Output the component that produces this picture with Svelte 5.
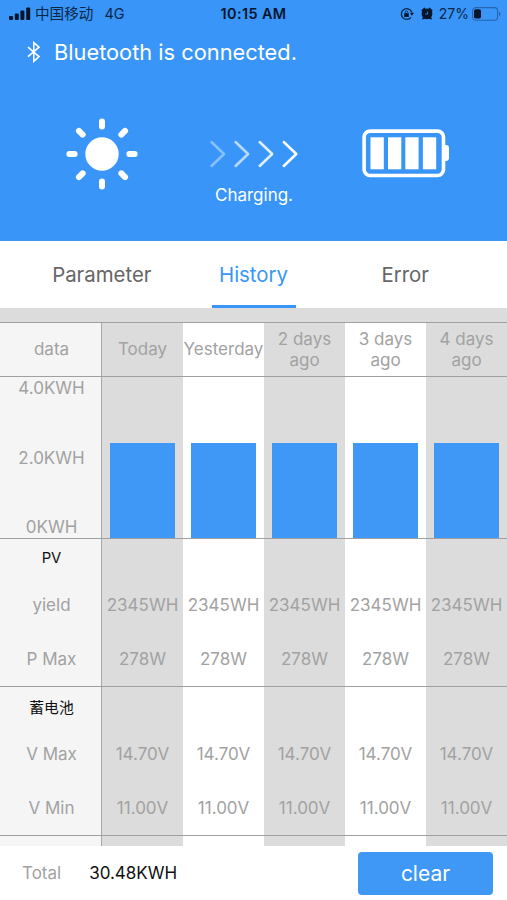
<script>
	let tabs = ["Parameter", "History", "Error"];
	let active = "History";

	// yield per day, in KWH
	const maxYield = 4;
	let days = [
		{ name: "Today", kwh: 2.36 },
		{ name: "Yesterday", kwh: 2.36 },
		{ name: "2 days ago", kwh: 2.36 },
		{ name: "3 days ago", kwh: 2.36 },
		{ name: "4 days ago", kwh: 2.36 }
	];

	let sections = [
		{ title: "PV", rows: [["yield", "2345WH"], ["P Max", "278W"]] },
		{ title: "蓄电池", rows: [["V Max", "14.70V"], ["V Min", "11.00V"]] }
	];

	const rays = [0, 45, 90, 135, 180, 225, 270, 315];
	const arrows = [0.4, 0.65, 0.85, 1];
	const cells = [9.5, 27, 44.3, 61.9];
</script>

<div class="app">
	<header>
		<div class="status">
			<div class="carrier">
				<svg width="22" height="14" viewBox="0 0 22 14">
					<rect x="0" y="9" width="4" height="4" rx="1" />
					<rect x="5.8" y="6.6" width="4" height="6.4" rx="1" />
					<rect x="11.4" y="3.6" width="4" height="9.4" rx="1" />
					<rect x="17.2" y="0.6" width="4" height="12.4" rx="1" />
				</svg>
				<span class="operator">中国移动</span>
				<span class="network">4G</span>
			</div>
			<div class="clock">10:15 AM</div>
			<div class="power">
				<svg class="lock" width="14" height="14" viewBox="0 0 14 14">
					<path d="M11.9 5.4A5.4 5.4 0 1 0 11 10.4" fill="none" stroke="#0b2748" stroke-width="1.3" />
					<path d="M9.8 5.8h4.2l-2.1 3z" />
					<rect x="4.2" y="6.3" width="4.6" height="3.6" rx="0.5" />
					<path d="M5.2 6.5V5.3a1.3 1.3 0 0 1 2.6 0v1.2" fill="none" stroke="#0b2748" stroke-width="0.9" />
				</svg>
				<svg class="alarm" width="12" height="13" viewBox="0 0 12 13">
					<circle cx="6" cy="6.8" r="5.4" />
					<path d="M0.3 3.4L3.4 0.4 4.6 1.6 1.3 4.8zM11.7 3.4L8.6 0.4 7.4 1.6 10.7 4.8zM1 12.6l1-3 2.6 2.2zM11 12.6l-1-3-2.6 2.2z" />
					<path d="M6.6 4.6v2.5H4.2" fill="none" stroke="#3996f8" stroke-width="0.8" />
				</svg>
				<span class="percent">27%</span>
				<svg class="cell" width="30" height="14" viewBox="0 0 30 14">
					<rect x="0.6" y="0.6" width="25" height="12.6" rx="3.2" fill="none" stroke="#2465ac" stroke-width="1.1" />
					<rect x="2" y="2.2" width="7" height="9.4" rx="1.8" />
					<path d="M27 4.7a2.4 2.4 0 0 1 0 4.4z" fill="#2465ac" />
				</svg>
			</div>
		</div>

		<div class="bluetooth">
			<svg width="14" height="22" viewBox="0 0 14 22" fill="none" stroke="#fff" stroke-width="1.6">
				<path d="M1 6.2L12 15.6 6.8 20.4V1.6L12 6.2 1 15.6" />
			</svg>
			<span>Bluetooth is connected.</span>
		</div>

		<div class="flow">
			<svg class="sun" width="72" height="72" viewBox="-36 -36 72 72">
				<circle r="16.7" fill="#fff" />
				{#each rays as angle}
					<path d="M0 -32.6V-27.4" stroke="#fff" stroke-width="6" stroke-linecap="round" transform="rotate({angle})" />
				{/each}
			</svg>
			<div class="charging">
				<svg width="90" height="28" viewBox="0 0 90 28" fill="none" stroke="#fff" stroke-width="2.5" stroke-linecap="round" stroke-linejoin="round">
					{#each arrows as opacity, i}
						<path d="M2.5 2L15 14 2.5 26" transform="translate({i * 24.1})" {opacity} />
					{/each}
				</svg>
				<span>Charging.</span>
			</div>
			<svg class="battery" width="88" height="50" viewBox="0 0 88 50" fill="#fff">
				<rect x="3.1" y="3.1" width="79.4" height="44.4" rx="6" fill="none" stroke="#fff" stroke-width="3.6" />
				{#each cells as x}
					<rect {x} y="9.3" width="13.3" height="32" />
				{/each}
				<path d="M83 17h2q3 0 3 3v10q0 3-3 3h-2z" />
			</svg>
		</div>
	</header>

	<nav>
		{#each tabs as tab}
			<button class="tab" class:active={tab === active} on:click={() => (active = tab)}>
				<span>{tab}</span>
			</button>
		{/each}
	</nav>

	<main>
		<div class="row head">
			<div class="label">data</div>
			{#each days as day}
				<div class="col">{day.name}</div>
			{/each}
		</div>

		<div class="row chart">
			<div class="label scale">
				<span>4.0KWH</span>
				<span>2.0KWH</span>
				<span>0KWH</span>
			</div>
			{#each days as day}
				<div class="col">
					<div class="bar" style="height: {(day.kwh / maxYield) * 100}%"></div>
				</div>
			{/each}
		</div>

		{#each sections as section}
			<div class="section">
				<div class="row title">
					<div class="label">{section.title}</div>
					{#each days as day}
						<div class="col"></div>
					{/each}
				</div>
				{#each section.rows as [name, value]}
					<div class="row">
						<div class="label">{name}</div>
						{#each days as day}
							<div class="col">{value}</div>
						{/each}
					</div>
				{/each}
			</div>
		{/each}

		<div class="row rest">
			<div class="label"></div>
			{#each days as day}
				<div class="col"></div>
			{/each}
		</div>
	</main>

	<footer>
		<span class="caption">Total</span>
		<span class="total">30.48KWH</span>
		<button class="clear">clear</button>
	</footer>
</div>

<style>
	:global(body) {
		margin: 0;
	}

	.app {
		display: flex;
		flex-direction: column;
		width: 507px;
		height: 900px;
		overflow: hidden;
		background: #fff;
		font-family: Inter, "Noto Sans CJK SC", sans-serif;
		color: #a2a2a2;
	}

	svg {
		display: block;
		flex: none;
	}

	button {
		border: 0;
		padding: 0;
		font: inherit;
		background: none;
	}

	header {
		height: 241px;
		background: #3996f8;
		color: #fff;
	}

	.status {
		display: grid;
		grid-template-columns: 1fr auto 1fr;
		height: 27px;
		padding: 0 5px 0 9px;
		align-items: center;
		font-size: 14px;
		line-height: 18px;
		color: #0b2748;
	}

	.status svg {
		fill: #06152a;
	}

	.carrier,
	.power {
		display: flex;
		align-items: center;
	}

	.power {
		justify-content: flex-end;
	}

	.operator {
		margin-left: 4px;
		font-size: 14.6px;
	}

	.network {
		margin-left: 11px;
		font-size: 14.4px;
	}

	.clock {
		font-weight: 600;
		font-size: 14.4px;
		letter-spacing: 0.4px;
		margin-right: 4px;
		color: #06152a;
	}

	.alarm {
		margin-left: 7px;
	}

	.percent {
		margin: 0 3px 0 6px;
	}

	.bluetooth {
		display: flex;
		align-items: center;
		height: 50px;
		padding-left: 27px;
		gap: 13px;
		font-size: 21.8px;
	}

	.flow {
		display: flex;
		align-items: flex-start;
		padding: 41px 58px 0 66px;
	}

	.charging {
		display: flex;
		flex-direction: column;
		align-items: center;
		margin-left: 71px;
		padding-top: 22px;
		font-size: 17px;
	}

	.charging span {
		margin-top: 16px;
		line-height: 22px;
	}

	.battery {
		margin: 10px 0 0 auto;
	}

	nav {
		display: flex;
		justify-content: space-around;
		height: 67px;
		padding: 0 26px;
	}

	.tab {
		display: flex;
		flex: 1;
		justify-content: center;
		color: #666;
		font-size: 20.4px;
	}

	.tab span {
		box-sizing: border-box;
		width: 84px;
		height: 67px;
		line-height: 68px;
		display: flex;
		justify-content: center;
	}

	.tab.active span {
		color: #3996f8;
		border-bottom: 3px solid #3996f8;
	}

	main {
		flex: 1;
		border-top: 14px solid #dcdcdc;
		overflow: hidden;
		font-size: 17px;
	}

	.row {
		display: grid;
		grid-template-columns: 102px repeat(5, 81px);
		height: 54px;
		box-sizing: border-box;
	}

	.label,
	.col {
		display: flex;
		align-items: center;
		justify-content: center;
		text-align: center;
		box-sizing: border-box;
	}

	.label {
		padding-left: 2px;
		background: #f5f5f5;
		border-right: 1px solid #a8a8a8;
	}

	.col:nth-child(even) {
		background: #dcdcdc;
	}

	.head {
		height: 55px;
		border-top: 1px solid #a0a0a0;
		border-bottom: 1px solid #a0a0a0;
		line-height: 21px;
	}

	.chart {
		height: 162px;
		border-bottom: 1px solid #a0a0a0;
	}

	.scale {
		flex-direction: column;
		justify-content: space-between;
		line-height: 22px;
	}

	.chart .col {
		align-items: flex-end;
	}

	.bar {
		width: 65px;
		background: #3f98f6;
	}

	.section {
		border-bottom: 1px solid #a0a0a0;
	}

	.title {
		height: 39.4px;
	}

	.title .label {
		padding-bottom: 1px;
		color: #111;
		font-size: 14.8px;
	}

	footer {
		display: flex;
		align-items: center;
		height: 54px;
		padding: 0 14px 0 22px;
		font-size: 17px;
	}

	.total {
		margin-left: 28px;
		color: #111;
	}

	.clear {
		width: 135px;
		height: 43px;
		margin-left: auto;
		border-radius: 4px;
		background: #3f98f6;
		color: #fff;
		font-size: 21px;
	}
</style>
